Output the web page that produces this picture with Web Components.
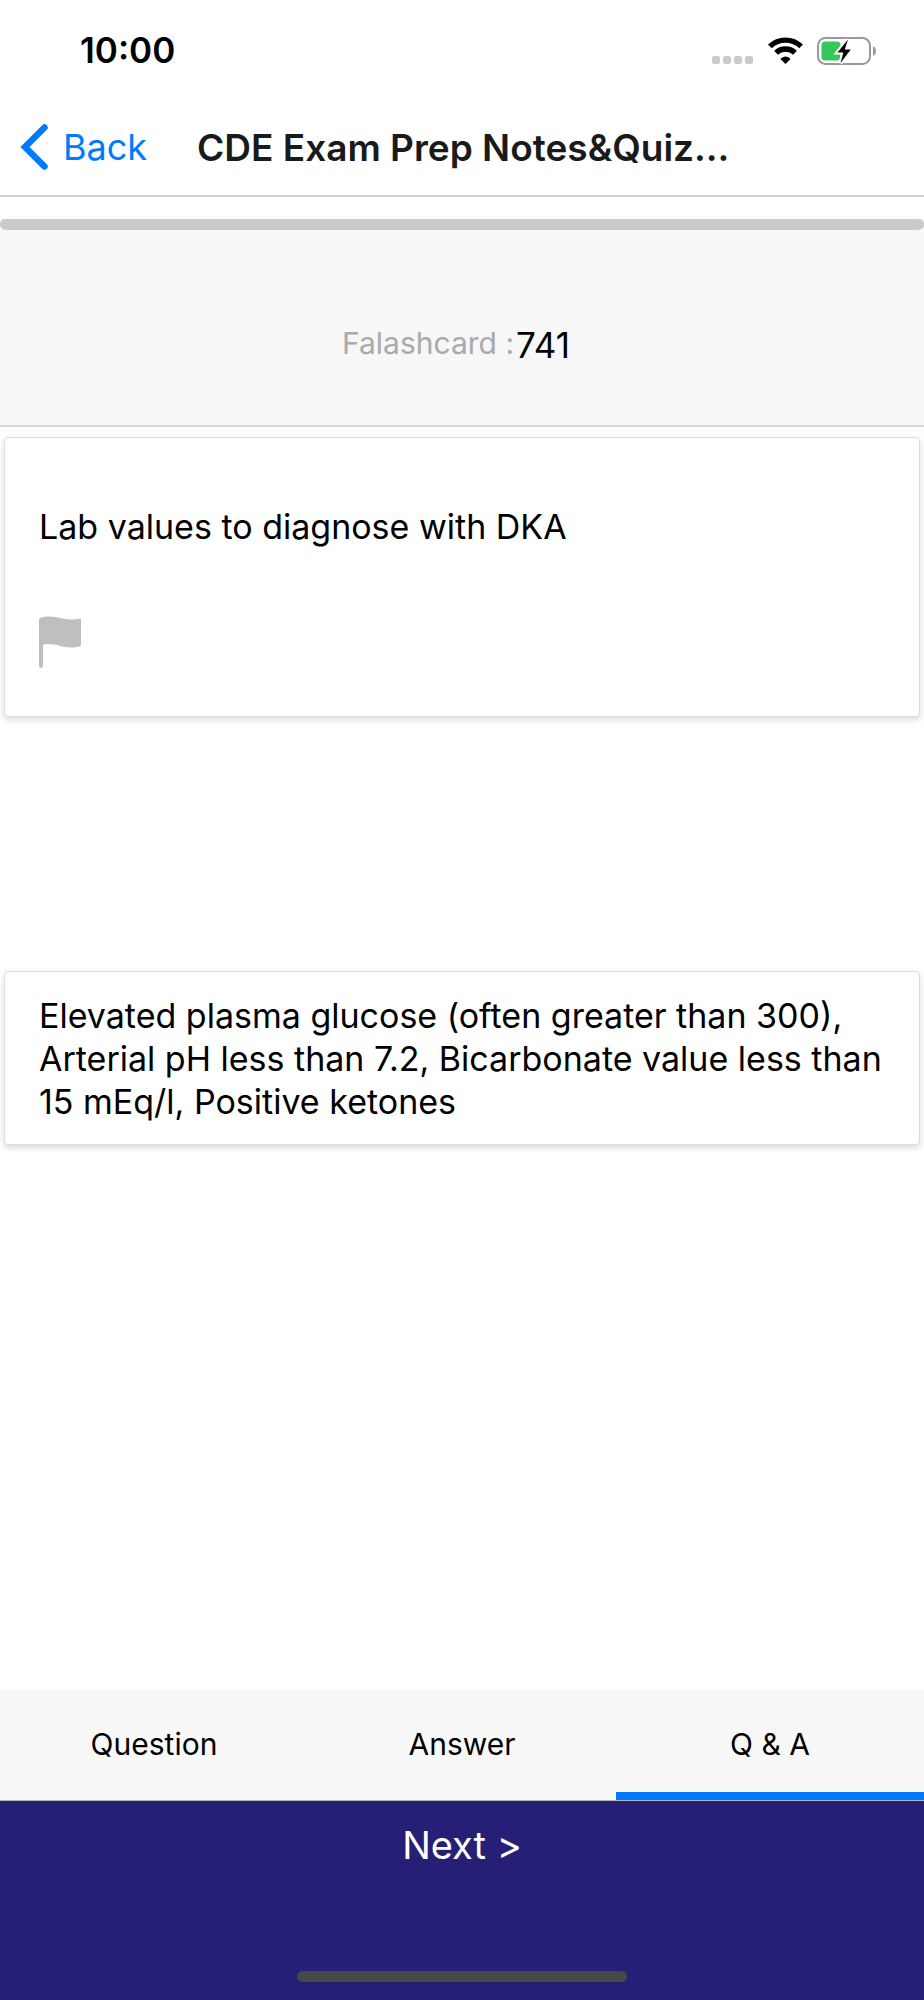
<!DOCTYPE html>
<html lang="en">
<head>
<meta charset="utf-8">
<meta name="viewport" content="width=device-width, initial-scale=1">
<title>CDE Exam Prep Notes&amp;Quiz</title>
<style>
    body {
        margin: 0;
        background: #fff;
        color: #000;
        font-family: Inter, "Liberation Sans", sans-serif;
        font-size: 35px;
        line-height: 43px;
    }
</style>
</head>
<body>
<flashcard-app>
    <status-bar slot="top">10:00</status-bar>
    <nav-bar slot="top">CDE Exam Prep Notes&amp;Quiz...</nav-bar>
    <card-counter slot="top" label="Falashcard :">741</card-counter>

    <flash-card flaggable>Lab values to diagnose with DKA</flash-card>
    <flash-card>Elevated plasma glucose (often greater than 300), Arterial pH less than 7.2, Bicarbonate value less than 15 mEq/l, Positive ketones</flash-card>

    <mode-tabs slot="bottom" tabs="Question|Answer|Q &amp; A" selected="2"></mode-tabs>
    <next-bar slot="bottom">Next &gt;</next-bar>
</flashcard-app>

<script>
/**
 * Base class: puts the style and the markup of an element in its shadow root.
 */
class BaseElement extends HTMLElement {
    connectedCallback() {
        if (this.shadowRoot) return;
        const shadow = this.attachShadow({ mode: 'open' });
        const templateElem = document.createElement('template');
        templateElem.innerHTML = `<style>${this.css}</style>${this.html}`;
        shadow.appendChild(templateElem.content.cloneNode(true));
    }
}

/** Page frame: header on top, cards in the middle, controls at the bottom. */
class FlashcardApp extends BaseElement {
    get css() {
        return /*css*/`
            :host {
                display: flex;
                flex-direction: column;
                min-height: 100vh;
            }
            main {
                flex: 1;
                display: grid;
                grid-template-rows: 534px auto;
                align-content: start;
                align-items: start;
                padding: 10px 4px;
            }
        `;
    }

    get html() {
        return /*html*/`
            <header><slot name="top"></slot></header>
            <main><slot></slot></main>
            <footer><slot name="bottom"></slot></footer>
        `;
    }
}

class StatusBar extends BaseElement {
    get css() {
        return /*css*/`
            :host {
                display: flex;
                align-items: center;
                justify-content: space-between;
                height: 101px;
                padding: 0 47px 0 80px;
                font-weight: 600;
            }
            .icons {
                display: flex;
                align-items: center;
                gap: 14px;
            }
            svg {
                display: block;
            }
        `;
    }

    get html() {
        return /*html*/`
            <time><slot></slot></time>
            <div class="icons">
                <svg width="42" height="28" viewBox="0 0 42 28" fill="#cbcbcb" aria-hidden="true">
                    <rect x="0" y="19" width="8" height="8" rx="2.5"/>
                    <rect x="11" y="19" width="8" height="8" rx="2.5"/>
                    <rect x="22" y="19" width="8" height="8" rx="2.5"/>
                    <rect x="33" y="19" width="8" height="8" rx="2.5"/>
                </svg>
                <svg width="35" height="28" viewBox="0 0 35 28" aria-hidden="true">
                    <g fill="none" stroke="#000" stroke-width="5.4">
                        <path d="M1.900 9.400a22.500 22.500 0 0 1 31.200 0"/>
                        <path d="M8 15.700a14 14 0 0 1 19 0"/>
                    </g>
                    <path d="M17.500 27l-4.800-4.800q0-.7.7-1.200a6.800 6.800 0 0 1 8.200 0q.7.5.7 1.200z"/>
                </svg>
                <svg width="60" height="28" viewBox="0 0 60 28" aria-hidden="true">
                    <rect x="1" y="1" width="52" height="26" rx="7.500" fill="none" stroke="#999" stroke-width="2"/>
                    <path d="M56 9.200c4 1.200 4 8.400 0 9.600z" fill="#999"/>
                    <rect x="4.500" y="4.500" width="19" height="19" rx="3.500" fill="#34c759"/>
                    <path d="M31 2.500L20.500 15.500h5.800L23.500 26 33.800 12.500h-6z" fill="#fff" stroke="#fff" stroke-width="4"/>
                    <path d="M31 2.500L20.500 15.500h5.800L23.500 26 33.800 12.500h-6z"/>
                </svg>
            </div>
        `;
    }
}

class NavBar extends BaseElement {
    get css() {
        return /*css*/`
            :host {
                display: flex;
                align-items: center;
                height: 92px;
                padding: 0 20px 2px;
                border-bottom: 2px solid #cfcfcf;
            }
            a {
                display: flex;
                align-items: center;
                gap: 14px;
                margin-right: 50px;
                color: #007aff;
                font-size: 36px;
                text-decoration: none;
            }
            h1 {
                margin: 0;
                color: #1a1a1a;
                font-size: 37px;
                font-weight: 600;
                white-space: nowrap;
            }
        `;
    }

    get html() {
        return /*html*/`
            <a href="#">
                <svg width="29" height="46" viewBox="0 0 29 46" aria-hidden="true">
                    <path d="M24.500 3.500L5 23l19.500 19.500" fill="none" stroke="#007aff" stroke-width="6.500" stroke-linecap="round"/>
                </svg>
                Back
            </a>
            <h1><slot></slot></h1>
        `;
    }
}

class CardCounter extends BaseElement {
    get css() {
        return /*css*/`
            :host {
                display: block;
                padding-top: 22px;
            }
            .track {
                height: 11px;
                border-radius: 5px;
                background: #cbcbcb;
            }
            .panel {
                display: flex;
                align-items: center;
                justify-content: center;
                height: 195px;
                padding-right: 12px;
                border-bottom: 2px solid #d9d9d9;
                background: #f7f7f7;
            }
            .label {
                padding-bottom: 4px;
                color: #aaa;
                font-size: 30px;
            }
            .value {
                padding-left: 2px;
            }
            .panel > span {
                margin-top: 36px;
            }
        `;
    }

    get html() {
        return /*html*/`
            <div class="track"></div>
            <div class="panel">
                <span class="label">${this.getAttribute('label')}</span>
                <span class="value"><slot></slot></span>
            </div>
        `;
    }
}

class FlashCard extends BaseElement {
    get css() {
        return /*css*/`
            :host {
                display: block;
                box-sizing: border-box;
                padding: 22px 24px 21px 34px;
                border: 1px solid #dcdcdc;
                border-radius: 4px;
                background: #fff;
                box-shadow: 0 3px 6px rgba(0, 0, 0, .14);
                font-size: 34px;
            }
            :host([flaggable]) {
                padding-top: 67px;
                padding-bottom: 48px;
            }
            p {
                margin: 0;
            }
            button {
                display: block;
                margin-top: 68px;
                padding: 0;
                border: 0;
                background: none;
                color: #bfbfbf;
            }
            svg {
                display: block;
            }
        `;
    }

    get html() {
        const flag = /*html*/`
            <button type="button" aria-label="Flag this card">
                <svg width="42" height="52" viewBox="0 0 42 52" fill="currentColor" aria-hidden="true">
                    <path d="M0 3.500Q0 2.500 1 2C4 .7 7.500.5 11 .5c8 0 13.500 3 21 3 3.500 0 6-.4 8.500-1 1-.2 1.500.2 1.500 1V29q0 1-1 1.300c-2.500.8-5.500 1.200-9 1.200-8.500 0-14-3.500-21.500-3.500-2.500 0-4.500.2-6.500.7V50a2 2 0 0 1-4 0z"/>
                </svg>
            </button>
        `;
        return `<p><slot></slot></p>${this.hasAttribute('flaggable') ? flag : ''}`;
    }
}

class ModeTabs extends BaseElement {
    get css() {
        return /*css*/`
            :host {
                display: block;
                border-bottom: 1px solid #b5b5b8;
                background: #f8f8f8;
            }
            div {
                display: grid;
                grid-template-columns: repeat(3, 1fr);
            }
            button {
                height: 110px;
                padding: 6px 0 0;
                border: 0;
                border-bottom: 8px solid transparent;
                background: none;
                color: #000;
                font: inherit;
                font-size: 30px;
                line-height: 36px;
            }
            button[aria-selected="true"] {
                border-bottom-color: #007aff;
            }
        `;
    }

    get html() {
        const selected = Number(this.getAttribute('selected'));
        const buttons = this.getAttribute('tabs').split('|').map((name, i) =>
            `<button type="button" role="tab" aria-selected="${i === selected}">${name.replace('&', '&amp;')}</button>`
        );
        return `<div role="tablist">${buttons.join('')}</div>`;
    }

    connectedCallback() {
        super.connectedCallback();
        const buttons = [...this.shadowRoot.querySelectorAll('button')];
        buttons.forEach(button => button.addEventListener('click', () => {
            buttons.forEach(other => other.setAttribute('aria-selected', other === button));
        }));
    }
}

class NextBar extends BaseElement {
    get css() {
        return /*css*/`
            :host {
                display: flex;
                flex-direction: column;
                align-items: center;
                justify-content: space-between;
                box-sizing: border-box;
                height: 199px;
                padding: 20px 0 18px;
                background: #261f76;
            }
            button {
                width: 100%;
                padding: 0;
                border: 0;
                background: none;
                color: #fff;
                font: inherit;
                font-size: 38px;
                line-height: 48px;
            }
            .home {
                width: 330px;
                height: 11px;
                border-radius: 6px;
                background: #484848;
            }
        `;
    }

    get html() {
        return /*html*/`
            <button type="button"><slot></slot></button>
            <div class="home"></div>
        `;
    }
}

customElements.define('flashcard-app', FlashcardApp);
customElements.define('status-bar', StatusBar);
customElements.define('nav-bar', NavBar);
customElements.define('card-counter', CardCounter);
customElements.define('flash-card', FlashCard);
customElements.define('mode-tabs', ModeTabs);
customElements.define('next-bar', NextBar);
</script>
</body>
</html>
